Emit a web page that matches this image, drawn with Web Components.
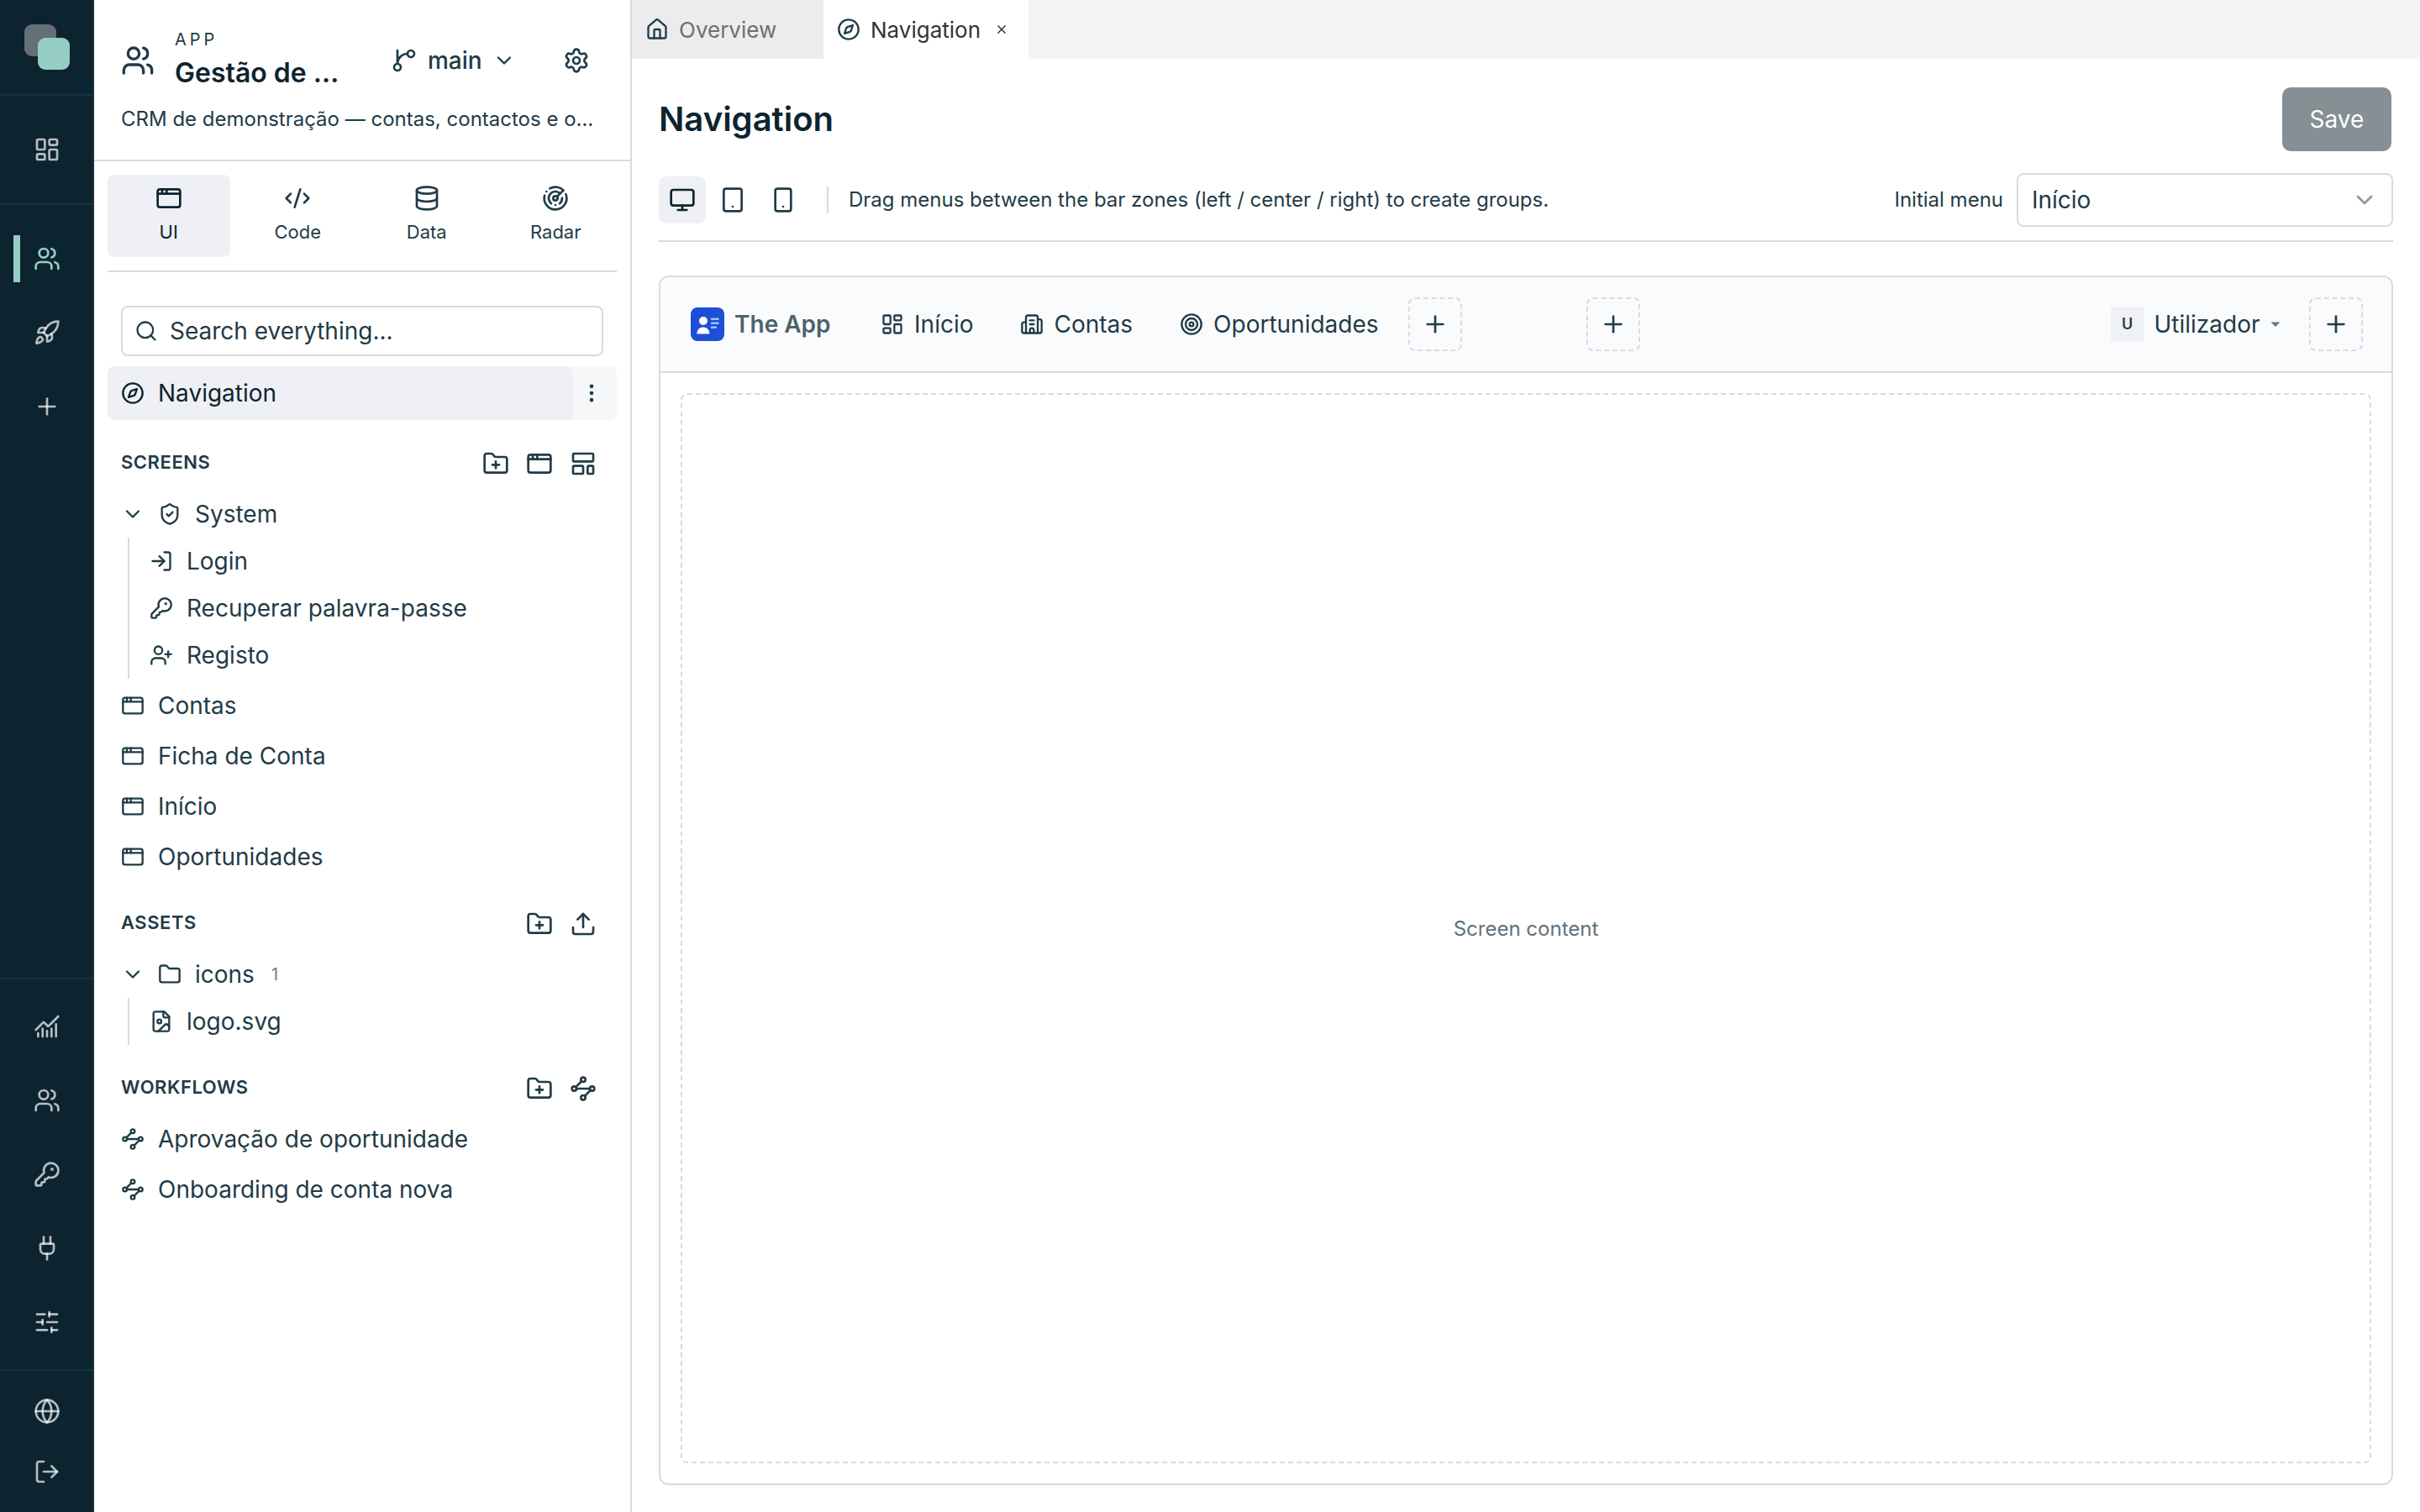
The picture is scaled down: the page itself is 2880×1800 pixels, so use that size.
<!DOCTYPE html>
<html lang="en">
<head>
<meta charset="utf-8">
<title>Navigation</title>
<style>
  :root {
    --ink: #1f3b47;
    --ink-strong: #0c242f;
    --line: #d5dce2;
    --active: #eff0f5;
    --rail: #0c242f;
    --mint: #96cdc5;
  }
  html, body {
    margin: 0;
    height: 100%;
  }
  body {
    background: #fff;
    color: var(--ink);
    font-family: Inter, "Liberation Sans", sans-serif;
    font-size: 28px;
    line-height: 1.5;
    overflow: hidden;
  }
</style>
</head>
<body>
<app-shell>
  <app-rail slot="rail"></app-rail>
  <app-sidebar slot="sidebar"></app-sidebar>
  <app-editor slot="main"></app-editor>
</app-shell>

<script>
const ICONS = {
  dashboard: '<rect width="7" height="9" x="3" y="3" rx="1"/><rect width="7" height="5" x="14" y="3" rx="1"/><rect width="7" height="9" x="14" y="12" rx="1"/><rect width="7" height="5" x="3" y="16" rx="1"/>',
  users: '<path d="M16 21v-2a4 4 0 0 0-4-4H6a4 4 0 0 0-4 4v2"/><path d="M16 3.128a4 4 0 0 1 0 7.744"/><path d="M22 21v-2a4 4 0 0 0-3-3.87"/><circle cx="9" cy="7" r="4"/>',
  rocket: '<path d="M12 15v5s3.03-.55 4-2c1.08-1.62 0-5 0-5"/><path d="M4.5 16.5c-1.5 1.26-2 5-2 5s3.74-.5 5-2c.71-.84.7-2.13-.09-2.91a2.18 2.18 0 0 0-2.91-.09"/><path d="M9 12a22 22 0 0 1 2-3.95A12.88 12.88 0 0 1 22 2c0 2.72-.78 7.5-6 11a22.4 22.4 0 0 1-4 2z"/><path d="M9 12H4s.55-3.03 2-4c1.62-1.08 5 .05 5 .05"/>',
  plus: '<path d="M5 12h14"/><path d="M12 5v14"/>',
  chart: '<path d="M12 16v5"/><path d="M16 14v7"/><path d="M20 10v11"/><path d="m22 3-8.646 8.646a.5.5 0 0 1-.708 0L9.354 8.354a.5.5 0 0 0-.707 0L2 15"/><path d="M4 18v3"/><path d="M8 14v7"/>',
  key: '<path d="M2.586 17.414A2 2 0 0 0 2 18.828V21a1 1 0 0 0 1 1h3a1 1 0 0 0 1-1v-1a1 1 0 0 1 1-1h1a1 1 0 0 0 1-1v-1a1 1 0 0 1 1-1h.172a2 2 0 0 0 1.414-.586l.814-.814a6.5 6.5 0 1 0-4-4z"/><circle cx="16.5" cy="7.5" r=".5" fill="currentColor"/>',
  plug: '<path d="M12 22v-5"/><path d="M15 8V2"/><path d="M17 8a1 1 0 0 1 1 1v4a4 4 0 0 1-4 4h-4a4 4 0 0 1-4-4V9a1 1 0 0 1 1-1z"/><path d="M9 8V2"/>',
  sliders: '<path d="M10 5H3"/><path d="M12 19H3"/><path d="M14 3v4"/><path d="M16 17v4"/><path d="M21 12h-9"/><path d="M21 19h-5"/><path d="M21 5h-7"/><path d="M8 10v4"/><path d="M8 12H3"/>',
  globe: '<circle cx="12" cy="12" r="10"/><path d="M12 2a14.5 14.5 0 0 0 0 20 14.5 14.5 0 0 0 0-20"/><path d="M2 12h20"/>',
  logout: '<path d="m16 17 5-5-5-5"/><path d="M21 12H9"/><path d="M9 21H5a2 2 0 0 1-2-2V5a2 2 0 0 1 2-2h4"/>',
  login: '<path d="m10 17 5-5-5-5"/><path d="M15 12H3"/><path d="M15 3h4a2 2 0 0 1 2 2v14a2 2 0 0 1-2 2h-4"/>',
  branch: '<path d="M15 6a9 9 0 0 0-9 9V3"/><circle cx="18" cy="6" r="3"/><circle cx="6" cy="18" r="3"/>',
  chevron: '<path d="m6 9 6 6 6-6"/>',
  settings: '<path d="M9.671 4.136a2.34 2.34 0 0 1 4.659 0 2.34 2.34 0 0 0 3.319 1.915 2.34 2.34 0 0 1 2.33 4.033 2.34 2.34 0 0 0 0 3.831 2.34 2.34 0 0 1-2.33 4.033 2.34 2.34 0 0 0-3.319 1.915 2.34 2.34 0 0 1-4.659 0 2.34 2.34 0 0 0-3.32-1.915 2.34 2.34 0 0 1-2.33-4.033 2.34 2.34 0 0 0 0-3.831A2.34 2.34 0 0 1 6.35 6.051a2.34 2.34 0 0 0 3.319-1.915"/><circle cx="12" cy="12" r="3"/>',
  window: '<rect x="2" y="4" width="20" height="16" rx="2"/><path d="M10 4v4"/><path d="M2 8h20"/><path d="M6 4v4"/>',
  code: '<path d="m18 16 4-4-4-4"/><path d="m6 8-4 4 4 4"/><path d="m14.5 4-5 16"/>',
  database: '<ellipse cx="12" cy="5" rx="9" ry="3"/><path d="M3 5V19A9 3 0 0 0 21 19V5"/><path d="M3 12A9 3 0 0 0 21 12"/>',
  radar: '<path d="M19.07 4.93A10 10 0 0 0 6.99 3.34"/><path d="M4 6h.01"/><path d="M2.29 9.62A10 10 0 1 0 21.31 8.35"/><path d="M16.24 7.76A6 6 0 1 0 8.23 16.67"/><path d="M12 18h.01"/><path d="M17.99 11.66A6 6 0 0 1 15.77 16.67"/><circle cx="12" cy="12" r="2"/><path d="m13.41 10.59 5.66-5.66"/>',
  search: '<path d="m21 21-4.34-4.34"/><circle cx="11" cy="11" r="8"/>',
  compass: '<path d="m16.24 7.76-1.804 5.411a2 2 0 0 1-1.265 1.265L7.76 16.24l1.804-5.411a2 2 0 0 1 1.265-1.265z"/><circle cx="12" cy="12" r="10"/>',
  more: '<circle cx="12" cy="12" r="1"/><circle cx="12" cy="5" r="1"/><circle cx="12" cy="19" r="1"/>',
  folder: '<path d="M20 20a2 2 0 0 0 2-2V8a2 2 0 0 0-2-2h-7.9a2 2 0 0 1-1.69-.9L9.6 3.9A2 2 0 0 0 7.93 3H4a2 2 0 0 0-2 2v13a2 2 0 0 0 2 2Z"/>',
  folderPlus: '<path d="M12 10v6"/><path d="M9 13h6"/><path d="M20 20a2 2 0 0 0 2-2V8a2 2 0 0 0-2-2h-7.9a2 2 0 0 1-1.69-.9L9.6 3.9A2 2 0 0 0 7.93 3H4a2 2 0 0 0-2 2v13a2 2 0 0 0 2 2Z"/>',
  template: '<rect width="18" height="7" x="3" y="3" rx="1"/><rect width="9" height="7" x="3" y="14" rx="1"/><rect width="5" height="7" x="16" y="14" rx="1"/>',
  shield: '<path d="M20 13c0 5-3.5 7.5-7.66 8.95a1 1 0 0 1-.67-.01C7.5 20.5 4 18 4 13V6a1 1 0 0 1 1-1c2 0 4.5-1.2 6.24-2.72a1.17 1.17 0 0 1 1.52 0C14.51 3.81 17 5 19 5a1 1 0 0 1 1 1z"/><path d="m9 12 2 2 4-4"/>',
  userPlus: '<path d="M16 21v-2a4 4 0 0 0-4-4H6a4 4 0 0 0-4 4v2"/><circle cx="9" cy="7" r="4"/><path d="M19 8v6"/><path d="M22 11h-6"/>',
  upload: '<path d="M12 3v12"/><path d="m17 8-5-5-5 5"/><path d="M21 15v4a2 2 0 0 1-2 2H5a2 2 0 0 1-2-2v-4"/>',
  image: '<path d="M15 2H6a2 2 0 0 0-2 2v16a2 2 0 0 0 2 2h12a2 2 0 0 0 2-2V7Z"/><path d="M14 2v4a2 2 0 0 0 2 2h4"/><circle cx="10" cy="12" r="2"/><path d="m20 17-1.296-1.296a2.41 2.41 0 0 0-3.408 0L9 22"/>',
  workflow: '<path d="m10.586 5.414-5.172 5.172"/><path d="m18.586 13.414-5.172 5.172"/><path d="M6 12h12"/><circle cx="12" cy="20" r="2"/><circle cx="12" cy="4" r="2"/><circle cx="20" cy="12" r="2"/><circle cx="4" cy="12" r="2"/>',
  house: '<path d="M15 21v-8a1 1 0 0 0-1-1h-4a1 1 0 0 0-1 1v8"/><path d="M3 10a2 2 0 0 1 .709-1.528l7-6a2 2 0 0 1 2.582 0l7 6A2 2 0 0 1 21 10v9a2 2 0 0 1-2 2H5a2 2 0 0 1-2-2z"/>',
  monitor: '<rect width="20" height="14" x="2" y="3" rx="2"/><path d="M8 21h8"/><path d="M12 17v4"/>',
  tablet: '<rect width="16" height="20" x="4" y="2" rx="2"/><path d="M12 18h.01"/>',
  phone: '<rect width="14" height="20" x="5" y="2" rx="2"/><path d="M12 18h.01"/>',
  building: '<path d="M10 12h4"/><path d="M10 8h4"/><path d="M14 21v-3a2 2 0 0 0-4 0v3"/><path d="M6 10H4a2 2 0 0 0-2 2v7a2 2 0 0 0 2 2h16a2 2 0 0 0 2-2V9a2 2 0 0 0-2-2h-2"/><path d="M6 21V5a2 2 0 0 1 2-2h8a2 2 0 0 1 2 2v16"/>',
  target: '<circle cx="12" cy="12" r="10"/><circle cx="12" cy="12" r="6"/><circle cx="12" cy="12" r="2"/>'
};

class UiIcon extends HTMLElement {
  connectedCallback() {
    const size = this.getAttribute("size") || 28;
    const stroke = this.getAttribute("stroke") || 2;
    this.attachShadow({ mode: "open" });
    this.shadowRoot.innerHTML = `
      <style>
        :host { display: block; flex: none; width: ${size}px; height: ${size}px; }
        svg { display: block; overflow: visible; }
      </style>
      <svg width="${size}" height="${size}" viewBox="0 0 24 24" fill="none" stroke="currentColor"
        stroke-width="${stroke}" stroke-linecap="round" stroke-linejoin="round">${ICONS[this.getAttribute("name")]}</svg>
    `;
  }
}
customElements.define("ui-icon", UiIcon);

class AppShell extends HTMLElement {
  constructor() {
    super();
    this.attachShadow({ mode: "open" });
    this.shadowRoot.innerHTML = `
      <style>
        :host {
          display: grid;
          grid-template-columns: 112px 640px minmax(0, 1fr);
          height: 100vh;
        }
      </style>
      <slot name="rail"></slot>
      <slot name="sidebar"></slot>
      <slot name="main"></slot>
    `;
  }
}
customElements.define("app-shell", AppShell);

class RailItem extends HTMLElement {
  connectedCallback() {
    this.attachShadow({ mode: "open" });
    this.shadowRoot.innerHTML = `
      <style>
        :host {
          display: flex;
          align-items: center;
          justify-content: center;
          box-sizing: border-box;
          width: 112px;
          height: 56px;
          color: rgba(255, 255, 255, 0.7);
        }
        :host([active]) {
          width: 96px;
          margin-left: 16px;
          padding-right: 24px;
          border-left: 8px solid var(--mint);
          color: var(--mint);
        }
      </style>
      <ui-icon name="${this.getAttribute("icon")}" size="32"></ui-icon>
    `;
  }
}
customElements.define("rail-item", RailItem);

class AppRail extends HTMLElement {
  constructor() {
    super();
    this.attachShadow({ mode: "open" });
    this.shadowRoot.innerHTML = `
      <style>
        :host {
          display: flex;
          flex-direction: column;
          background: var(--rail);
          border-right: 2px solid #14303f;
        }
        .group {
          display: flex;
          flex-direction: column;
          gap: 32px;
          padding: 36px 0;
        }
        .group + .group { border-top: 2px solid #14303f; }
        .logo { padding: 0; height: 112px; }
        .logo svg { display: block; }
        .space { flex: 1; }
        .tools { padding: 28px 0; border-top: 2px solid #14303f; }
        .account { padding: 20px 0; gap: 16px; }
      </style>
      <div class="group logo">
        <svg width="112" height="112" viewBox="0 0 112 112">
          <rect x="29" y="29" width="38" height="38" rx="9" fill="#656f77"/>
          <rect x="45" y="45" width="38" height="38" rx="9" fill="#96cdc5"/>
        </svg>
      </div>
      <div class="group"><rail-item icon="dashboard"></rail-item></div>
      <div class="group">
        <rail-item icon="users" active></rail-item>
        <rail-item icon="rocket"></rail-item>
        <rail-item icon="plus"></rail-item>
      </div>
      <div class="space"></div>
      <div class="group tools">
        <rail-item icon="chart"></rail-item>
        <rail-item icon="users"></rail-item>
        <rail-item icon="key"></rail-item>
        <rail-item icon="plug"></rail-item>
        <rail-item icon="sliders"></rail-item>
      </div>
      <div class="group account">
        <rail-item icon="globe"></rail-item>
        <rail-item icon="logout"></rail-item>
      </div>
    `;
  }
}
customElements.define("app-rail", AppRail);

class ModeTab extends HTMLElement {
  connectedCallback() {
    this.attachShadow({ mode: "open" });
    this.shadowRoot.innerHTML = `
      <style>
        :host {
          display: flex;
          flex-direction: column;
          align-items: center;
          box-sizing: border-box;
          height: 98px;
          padding-top: 12px;
          gap: 8px;
          border-radius: 8px;
          font-size: 22px;
          line-height: 32px;
        }
        :host([active]) { background: var(--active); color: var(--ink-strong); }
      </style>
      <ui-icon name="${this.getAttribute("icon")}" size="32"></ui-icon>
      <slot></slot>
    `;
  }
}
customElements.define("mode-tab", ModeTab);

class TreeItem extends HTMLElement {
  connectedCallback() {
    this.attachShadow({ mode: "open" });
    this.shadowRoot.innerHTML = `
      <style>
        :host {
          display: flex;
          align-items: center;
          gap: 16px;
          height: 56px;
          padding: 0 16px;
          white-space: nowrap;
        }
      </style>
      ${this.hasAttribute("open") ? '<ui-icon name="chevron"></ui-icon>' : ""}
      <ui-icon name="${this.getAttribute("icon")}"></ui-icon>
      <slot></slot>
    `;
  }
}
customElements.define("tree-item", TreeItem);

class TreeBranch extends HTMLElement {
  constructor() {
    super();
    this.attachShadow({ mode: "open" });
    this.shadowRoot.innerHTML = `
      <style>
        :host {
          display: block;
          margin-left: 24px;
          padding-left: 8px;
          border-left: 2px solid var(--line);
        }
      </style>
      <slot></slot>
    `;
  }
}
customElements.define("tree-branch", TreeBranch);

class TreeSection extends HTMLElement {
  connectedCallback() {
    const actions = this.getAttribute("actions").split(" ");
    this.attachShadow({ mode: "open" });
    this.shadowRoot.innerHTML = `
      <style>
        :host { display: block; }
        header {
          display: flex;
          align-items: center;
          height: 48px;
          padding: 28px 24px 8px 16px;
          gap: 20px;
        }
        h3 {
          flex: 1;
          margin: 0;
          padding-bottom: 4px;
          font-size: 22px;
          font-weight: 600;
          letter-spacing: 0.55px;
        }
        .list { display: flex; flex-direction: column; gap: 4px; }
      </style>
      <header>
        <h3>${this.getAttribute("label")}</h3>
        ${actions.map((name) => `<ui-icon name="${name}" size="32"></ui-icon>`).join("")}
      </header>
      <div class="list"><slot></slot></div>
    `;
  }
}
customElements.define("tree-section", TreeSection);

class AppSidebar extends HTMLElement {
  constructor() {
    super();
    this.attachShadow({ mode: "open" });
    this.shadowRoot.innerHTML = `
      <style>
        :host {
          display: flex;
          flex-direction: column;
          border-right: 2px solid var(--line);
        }
        .head {
          box-sizing: border-box;
          height: 192px;
          padding: 32px 32px 0;
          border-bottom: 2px solid var(--line);
        }
        .top { display: flex; align-items: center; height: 80px; }
        .app { width: 196px; margin-left: 24px; white-space: nowrap; }
        .kind { font-size: 20px; line-height: 30px; letter-spacing: 4px; }
        h2 { margin: 0; font-size: 32px; line-height: 50px; font-weight: 600; color: var(--ink-strong); }
        .main {
          display: flex;
          align-items: center;
          gap: 12px;
          margin-left: 61px;
          font-weight: 500;
        }
        .gear { margin: 0 16px 0 auto; }
        .about { margin: 12px 0 0; font-size: 24px; line-height: 36px; white-space: nowrap; }
        .modes {
          display: grid;
          grid-template-columns: repeat(4, 1fr);
          gap: 8px;
          margin: 16px 16px 0;
          padding-bottom: 16px;
          border-bottom: 2px solid var(--line);
        }
        .search {
          display: flex;
          align-items: center;
          gap: 14px;
          box-sizing: border-box;
          height: 60px;
          margin: 40px 32px 12px;
          padding: 0 14px;
          border: 2px solid var(--line);
          border-radius: 8px;
        }
        .tree { margin: 0 16px; }
        .current { display: flex; background: #f5f7f9; border-radius: 8px; }
        .current tree-item {
          flex: 1;
          height: 64px;
          background: var(--active);
          border-radius: 8px;
          color: var(--ink-strong);
        }
        .current > ui-icon { align-self: center; margin: 0 16px 0 8px; }
        small { margin-left: 4px; font-size: 20px; color: #6d7f88; }
      </style>
      <div class="head">
        <div class="top">
          <ui-icon name="users" size="40"></ui-icon>
          <div class="app">
            <div class="kind">APP</div>
            <h2>Gestão de …</h2>
          </div>
          <div class="main"><ui-icon name="branch" size="32"></ui-icon>main<ui-icon name="chevron"></ui-icon></div>
          <ui-icon class="gear" name="settings" size="32"></ui-icon>
        </div>
        <p class="about">CRM de demonstração — contas, contactos e o…</p>
      </div>
      <div class="modes">
        <mode-tab icon="window" active>UI</mode-tab>
        <mode-tab icon="code">Code</mode-tab>
        <mode-tab icon="database">Data</mode-tab>
        <mode-tab icon="radar">Radar</mode-tab>
      </div>
      <div class="search"><ui-icon name="search"></ui-icon>Search everything...</div>
      <div class="tree">
        <div class="current">
          <tree-item icon="compass">Navigation</tree-item>
          <ui-icon name="more"></ui-icon>
        </div>
        <tree-section label="SCREENS" actions="folderPlus window template">
          <div>
            <tree-item icon="shield" open>System</tree-item>
            <tree-branch>
              <tree-item icon="login">Login</tree-item>
              <tree-item icon="key">Recuperar palavra-passe</tree-item>
              <tree-item icon="userPlus">Registo</tree-item>
            </tree-branch>
          </div>
          <tree-item icon="window">Contas</tree-item>
          <tree-item icon="window">Ficha de Conta</tree-item>
          <tree-item icon="window">Início</tree-item>
          <tree-item icon="window">Oportunidades</tree-item>
        </tree-section>
        <tree-section label="ASSETS" actions="folderPlus upload">
          <div>
            <tree-item icon="folder" open>icons <small>1</small></tree-item>
            <tree-branch>
              <tree-item icon="image">logo.svg</tree-item>
            </tree-branch>
          </div>
        </tree-section>
        <tree-section label="WORKFLOWS" actions="folderPlus workflow">
          <tree-item icon="workflow">Aprovação de oportunidade</tree-item>
          <tree-item icon="workflow">Onboarding de conta nova</tree-item>
        </tree-section>
      </div>
    `;
  }
}
customElements.define("app-sidebar", AppSidebar);

class EditorTab extends HTMLElement {
  connectedCallback() {
    this.attachShadow({ mode: "open" });
    this.shadowRoot.innerHTML = `
      <style>
        :host {
          display: flex;
          align-items: center;
          gap: 12px;
          box-sizing: border-box;
          width: 228px;
          padding: 0 16px;
          background: #ececec;
          color: #6f6f6f;
          font-size: 26px;
        }
        :host([active]) { width: 244px; background: #fff; color: #333; }
        ui-icon { color: var(--ink); }
        .close { margin-left: 8px; }
      </style>
      <ui-icon name="${this.getAttribute("icon")}"></ui-icon>
      <slot></slot>
      ${this.hasAttribute("active") ? '<svg class="close" width="10" height="10" viewBox="0 0 10 10" stroke="#333" stroke-width="1.5"><path d="M.5.5l9 9M9.5.5l-9 9"/></svg>' : ""}
    `;
  }
}
customElements.define("editor-tab", EditorTab);

class MenuEntry extends HTMLElement {
  connectedCallback() {
    this.attachShadow({ mode: "open" });
    this.shadowRoot.innerHTML = `
      <style>
        :host { display: flex; align-items: center; gap: 12px; padding: 0 28px; }
      </style>
      <ui-icon name="${this.getAttribute("icon")}"></ui-icon>
      <slot></slot>
    `;
  }
}
customElements.define("menu-entry", MenuEntry);

class AddMenu extends HTMLElement {
  constructor() {
    super();
    this.attachShadow({ mode: "open" });
    this.shadowRoot.innerHTML = `
      <style>
        :host {
          display: flex;
          flex: none;
          align-items: center;
          justify-content: center;
          box-sizing: border-box;
          width: 64px;
          height: 64px;
          border: 2px dashed var(--line);
          border-radius: 8px;
        }
      </style>
      <ui-icon name="plus" size="32"></ui-icon>
    `;
  }
}
customElements.define("add-menu", AddMenu);

class MenuPreview extends HTMLElement {
  constructor() {
    super();
    this.attachShadow({ mode: "open" });
    this.shadowRoot.innerHTML = `
      <style>
        :host {
          display: flex;
          flex-direction: column;
          box-sizing: border-box;
          border: 2px solid var(--line);
          border-radius: 12px;
          overflow: hidden;
        }
        .bar {
          display: flex;
          align-items: center;
          height: 112px;
          padding: 0 34px 0 36px;
          background: #fafbfd;
          border-bottom: 2px solid var(--line);
        }
        .brand { margin: 0 31.5px 0 12px; font-weight: 600; color: #4c626c; }
        .first { margin-left: 7.5px; }
        .center { margin-left: 148px; }
        .user { display: flex; align-items: center; gap: 12px; margin-left: auto; margin-right: 34.5px; }
        .avatar {
          width: 40px;
          height: 40px;
          background: #f0f1f5;
          font-size: 18px;
          font-weight: 600;
          line-height: 40px;
          text-align: center;
        }
        .screen {
          flex: 1;
          display: flex;
          align-items: center;
          justify-content: center;
          margin: 24px;
          padding-top: 2px;
          border: 2px dashed var(--line);
          border-radius: 8px;
          font-size: 24px;
          color: #5f727b;
        }
      </style>
      <div class="bar">
        <svg width="40" height="40" viewBox="0 0 40 40">
          <rect width="40" height="40" rx="8" fill="#1d4ed8"/>
          <circle cx="15" cy="16" r="5" fill="#fff"/>
          <path d="M7.4 31.4c0-4.6 3-7.8 7.5-7.8s7.5 3.2 7.5 7.8z" fill="#fff"/>
          <path d="M25 13.8h7.6M25 18.8h7.6M25 23.8h5" stroke="#93c5fd" stroke-width="2.4" stroke-linecap="round"/>
        </svg>
        <span class="brand">The App</span>
        <menu-entry icon="dashboard">Início</menu-entry>
        <menu-entry icon="building">Contas</menu-entry>
        <menu-entry icon="target">Oportunidades</menu-entry>
        <add-menu class="first"></add-menu>
        <add-menu class="center"></add-menu>
        <div class="user">
          <div class="avatar">U</div>
          Utilizador
          <svg width="12" height="6" viewBox="0 0 12 6" fill="#647983"><path d="M.5.5h11L6 6z"/></svg>
        </div>
        <add-menu></add-menu>
      </div>
      <div class="screen">Screen content</div>
    `;
  }
}
customElements.define("menu-preview", MenuPreview);

class AppEditor extends HTMLElement {
  constructor() {
    super();
    this.attachShadow({ mode: "open" });
    this.shadowRoot.innerHTML = `
      <style>
        :host { display: flex; flex-direction: column; min-width: 0; }
        .tabs { display: flex; height: 70px; background: #f3f3f3; }
        .title {
          display: flex;
          align-items: center;
          justify-content: space-between;
          margin: 34px 34px 0 32px;
        }
        h1 { margin: 0; font-size: 40px; line-height: 60px; font-weight: 600; color: var(--ink-strong); }
        .save {
          width: 130px;
          height: 76px;
          border-radius: 10px;
          background: #859095;
          color: #fff;
          line-height: 76px;
          text-align: center;
        }
        .tools {
          display: flex;
          align-items: center;
          margin: 26px 32px 0;
          height: 64px;
          padding-bottom: 16px;
          border-bottom: 2px solid var(--line);
          font-size: 24px;
        }
        .device {
          display: flex;
          align-items: center;
          justify-content: center;
          width: 56px;
          height: 56px;
          margin-right: 4px;
          border-radius: 8px;
        }
        .device.on { background: var(--active); color: var(--ink-strong); }
        .rule { width: 2px; height: 32px; margin: 0 24px 0 20px; background: var(--line); }
        .label { margin-left: auto; margin-right: 16px; }
        .select {
          display: flex;
          align-items: center;
          justify-content: space-between;
          box-sizing: border-box;
          width: 448px;
          height: 64px;
          padding: 0 16px;
          border: 2px solid var(--line);
          border-radius: 8px;
          font-size: 28px;
        }
        .select ui-icon { color: #8a98a0; }
        menu-preview { flex: 1; margin: 40px 32px 32px; }
      </style>
      <div class="tabs">
        <editor-tab icon="house">Overview</editor-tab>
        <editor-tab icon="compass" active>Navigation</editor-tab>
      </div>
      <div class="title">
        <h1>Navigation</h1>
        <div class="save">Save</div>
      </div>
      <div class="tools">
        <div class="device on"><ui-icon name="monitor" size="32"></ui-icon></div>
        <div class="device"><ui-icon name="tablet" size="32"></ui-icon></div>
        <div class="device"><ui-icon name="phone" size="32"></ui-icon></div>
        <div class="rule"></div>
        Drag menus between the bar zones (left / center / right) to create groups.
        <span class="label">Initial menu</span>
        <div class="select">Início<ui-icon name="chevron" size="32"></ui-icon></div>
      </div>
      <menu-preview></menu-preview>
    `;
  }
}
customElements.define("app-editor", AppEditor);
</script>
</body>
</html>
